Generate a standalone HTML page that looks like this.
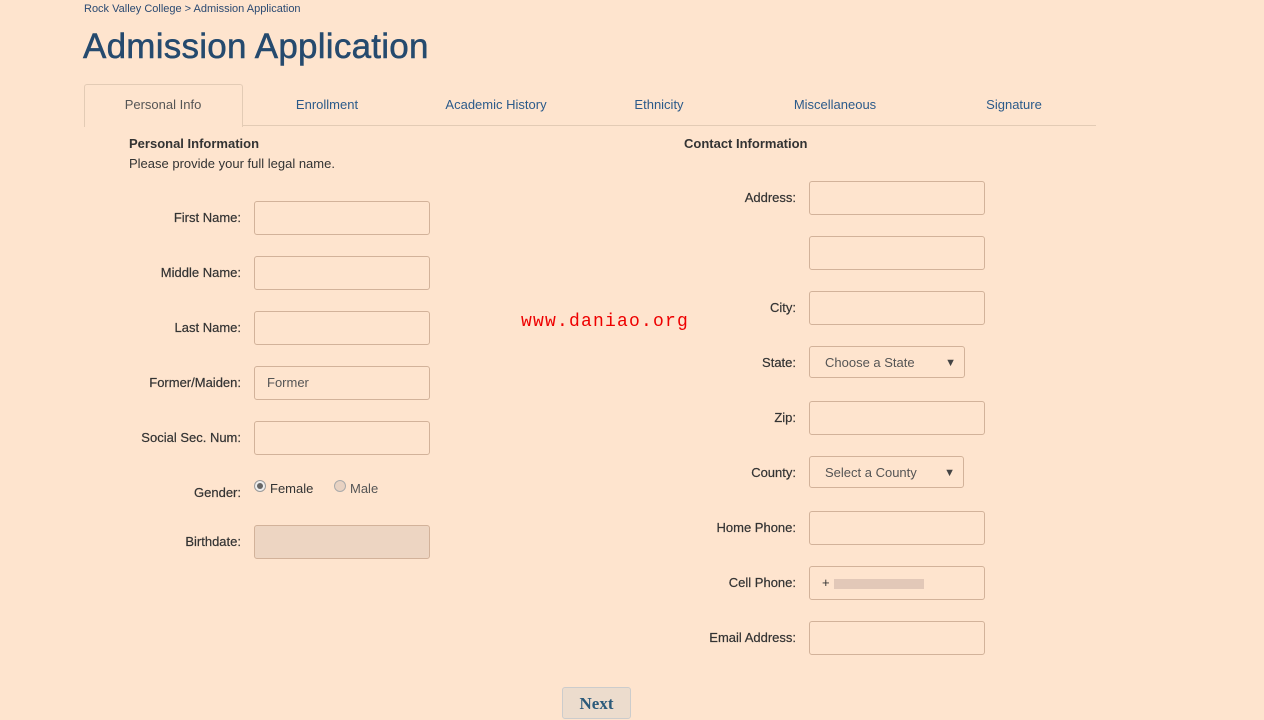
<!DOCTYPE html>
<html><head><style>
body{margin:0;width:1264px;height:712px;background:#fee4ce;font-family:"Liberation Sans",sans-serif;position:relative;overflow:hidden;color:#333}
.a{position:absolute}
.crumb{left:84px;top:3px;font-size:11px;color:#2b4a72}
h1{position:absolute;left:83px;top:27px;margin:0;font-size:35px;font-weight:normal;color:#254a6e;letter-spacing:0.25px;-webkit-text-stroke:0.5px #254a6e}
.line{left:84px;top:125px;width:1012px;height:1px;background:#e3cbb5}
.tabA{left:84px;top:84px;width:157px;height:42px;border:1px solid #e3cbb5;border-bottom:none;border-radius:3px 3px 0 0;background:#fee4ce}
.tab{top:97px;font-size:13px;color:#2b5a8a;transform:translateX(-50%);white-space:nowrap}
.lbl{font-size:13px;color:#333;text-align:right;width:200px;-webkit-text-stroke:0.2px #333}
.inp{width:174px;height:32px;border:1px solid #d2b29a;border-radius:3px;background:#fee4ce;box-sizing:content-box}
.sel{height:32px;border:1px solid #d2b29a;border-radius:3px;font-size:13px;color:#555;line-height:32px;padding-left:15px;box-sizing:border-box}
.sel span{position:absolute;right:8px;top:0;font-size:11px;color:#444}
.h{font-size:13px;font-weight:bold;color:#333}
</style></head><body>
<div class="a crumb">Rock Valley College &gt; Admission Application</div>
<h1>Admission Application</h1>
<div class="a line"></div>
<div class="a tabA"></div>
<div class="a tab" style="left:163px;color:#555">Personal Info</div>
<div class="a tab" style="left:327px">Enrollment</div>
<div class="a tab" style="left:496px">Academic History</div>
<div class="a tab" style="left:659px">Ethnicity</div>
<div class="a tab" style="left:835px">Miscellaneous</div>
<div class="a tab" style="left:1014px">Signature</div>

<div class="a h" style="left:129px;top:136px">Personal Information</div>
<div class="a" style="left:129px;top:156px;font-size:13px">Please provide your full legal name.</div>
<div class="a h" style="left:684px;top:136px">Contact Information</div>

<div class="a lbl" style="left:41px;top:210px">First Name:</div><div class="a inp" style="left:254px;top:201px"></div>
<div class="a lbl" style="left:41px;top:265px">Middle Name:</div><div class="a inp" style="left:254px;top:256px"></div>
<div class="a lbl" style="left:41px;top:320px">Last Name:</div><div class="a inp" style="left:254px;top:311px"></div>
<div class="a lbl" style="left:41px;top:375px">Former/Maiden:</div><div class="a inp" style="left:254px;top:366px;font-size:13px;color:#555;line-height:32px;text-indent:12px">Former</div>
<div class="a lbl" style="left:41px;top:430px">Social Sec. Num:</div><div class="a inp" style="left:254px;top:421px"></div>
<div class="a lbl" style="left:41px;top:485px">Gender:</div>
<div class="a" style="left:254px;top:480px;width:10px;height:10px;border:1px solid #999;border-radius:50%;background:#eee"><div style="margin:2px;width:6px;height:6px;border-radius:50%;background:#666"></div></div>
<div class="a" style="left:270px;top:481px;font-size:13px">Female</div>
<div class="a" style="left:334px;top:480px;width:10px;height:10px;border:1px solid #aaa;border-radius:50%;background:#e8d2c2"></div>
<div class="a" style="left:350px;top:481px;font-size:13px;color:#555">Male</div>
<div class="a lbl" style="left:41px;top:534px">Birthdate:</div><div class="a inp" style="left:254px;top:525px;background:#edd5c2"></div>

<div class="a" style="left:521px;top:312px;font-family:'Liberation Mono',monospace;font-size:18px;letter-spacing:1.2px;color:#e00">www.daniao.org</div>

<div class="a lbl" style="left:596px;top:190px">Address:</div><div class="a inp" style="left:809px;top:181px"></div>
<div class="a inp" style="left:809px;top:236px"></div>
<div class="a lbl" style="left:596px;top:300px">City:</div><div class="a inp" style="left:809px;top:291px"></div>
<div class="a lbl" style="left:596px;top:355px">State:</div><div class="a sel" style="left:809px;top:346px;width:156px">Choose a State<span>▼</span></div>
<div class="a lbl" style="left:596px;top:410px">Zip:</div><div class="a inp" style="left:809px;top:401px"></div>
<div class="a lbl" style="left:596px;top:465px">County:</div><div class="a sel" style="left:809px;top:456px;width:155px">Select a County<span>▼</span></div>
<div class="a lbl" style="left:596px;top:520px">Home Phone:</div><div class="a inp" style="left:809px;top:511px"></div>
<div class="a lbl" style="left:596px;top:575px">Cell Phone:</div><div class="a inp" style="left:809px;top:566px;font-size:13px;line-height:32px;text-indent:12px">+<span style="display:inline-block;width:90px;height:10px;background:#e2c8b8;vertical-align:middle;margin-left:4px;text-indent:0"></span></div>
<div class="a lbl" style="left:596px;top:630px">Email Address:</div><div class="a inp" style="left:809px;top:621px"></div>

<div class="a" style="left:562px;top:687px;width:67px;height:30px;border:1px solid #ccc;border-radius:3px;background:#ecdccd;font-family:'Liberation Serif',serif;font-size:17px;font-weight:bold;color:#2b5a7a;text-align:center;line-height:32px">Next</div>
</body></html>
